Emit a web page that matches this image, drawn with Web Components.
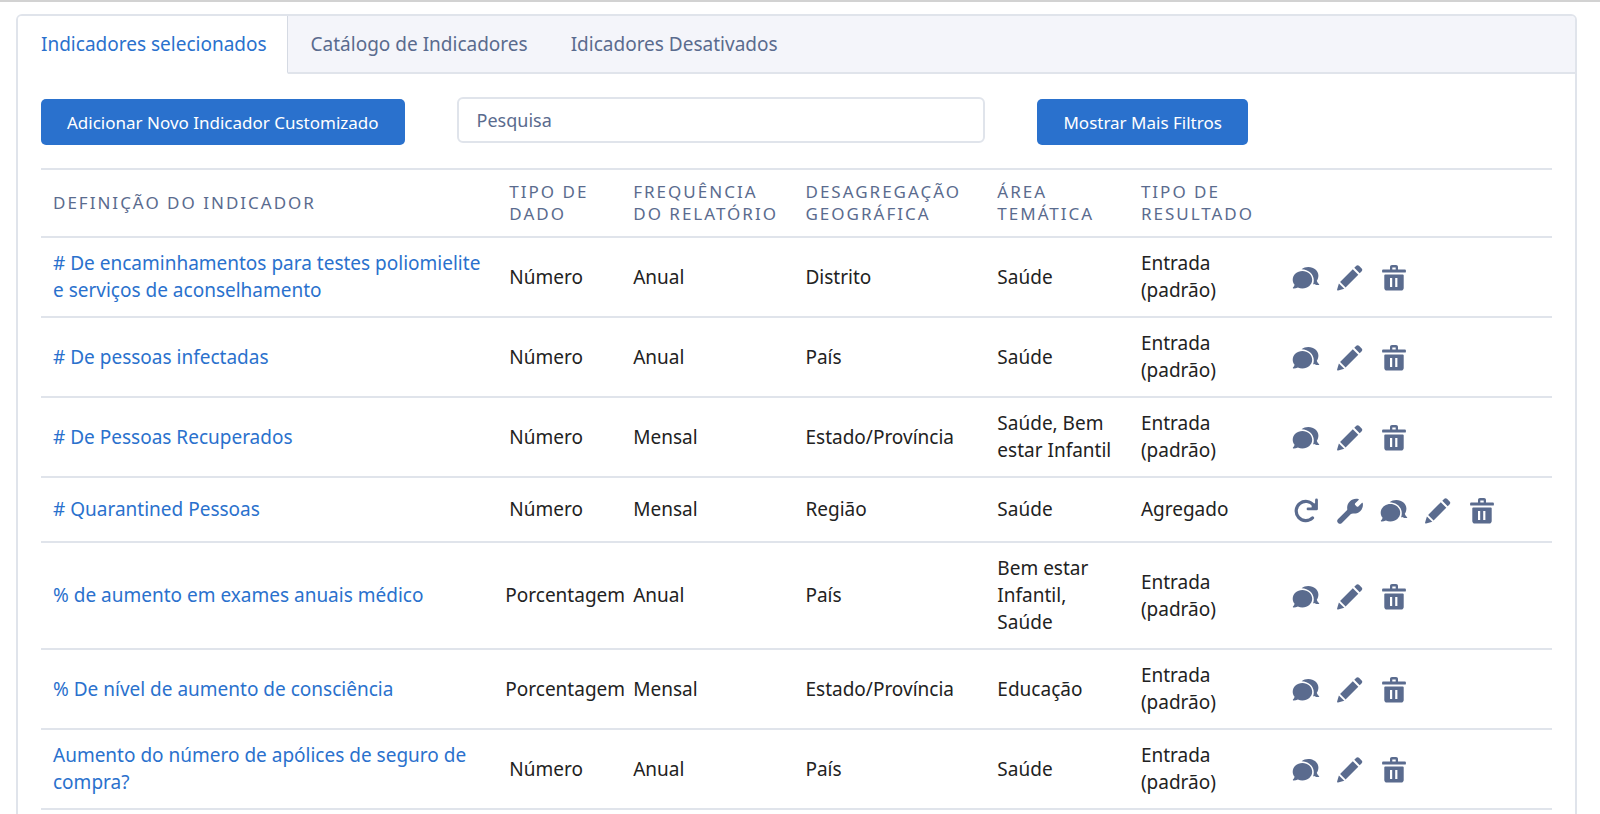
<!DOCTYPE html>
<html lang="pt">
<head>
<meta charset="utf-8">
<meta name="viewport" content="width=device-width, initial-scale=1">
<title>Indicadores</title>
<style>
  html { scrollbar-width: none; }
  body {
    margin: 0;
    background: #fff;
    color: #222;
    font-family: "Noto Sans", "Open Sans", sans-serif;
    font-size: 19px;
    line-height: 27px;
    --line: #e0e4eb;
    --slate: #5a6b8e;
    --blue: #2a71cd;
    --strip: #f4f5fa;
  }
</style>
</head>
<body>
<indicators-page>
  <tab-strip slot="tabs">
    <tab-link active>Indicadores selecionados</tab-link>
    <tab-link>Catálogo de Indicadores</tab-link>
    <tab-link>Idicadores Desativados</tab-link>
  </tab-strip>
  <filter-bar slot="filters">
    <brand-button>Adicionar Novo Indicador Customizado</brand-button>
    <search-box label="Pesquisa"></search-box>
    <brand-button>Mostrar Mais Filtros</brand-button>
  </filter-bar>
  <indicator-table></indicator-table>
</indicators-page>

<script>
class Base extends HTMLElement {
  connectedCallback() {
    if (this.shadowRoot) return;
    this.attachShadow({ mode: "open" }).innerHTML =
      "<style>*{box-sizing:border-box}</style>" + this.render();
  }
}

customElements.define("indicators-page", class extends Base {
  render() {
    return `<style>
      :host { display: block; border-top: 2px solid #d2d2d2; padding: 12px 23px 24px 16px; }
      main { border: 2px solid var(--line); border-radius: 6px; overflow: hidden; }
      .body { padding: 23px 23px 24px; }
    </style>
    <main>
      <slot name="tabs"></slot>
      <div class="body"><slot name="filters"></slot><slot></slot></div>
    </main>`;
  }
});

customElements.define("tab-strip", class extends Base {
  render() {
    return `<style>
      :host { display: block; background: var(--strip); }
      nav { display: flex; height: 58px; }
      nav::after { content: ""; flex: 1; border-bottom: 2px solid var(--line); }
    </style><nav><slot></slot></nav>`;
  }
});

customElements.define("tab-link", class extends Base {
  render() {
    return `<style>
      :host { display: flex; border-bottom: 2px solid var(--line); }
      :host([active]) { background: #fff; border-bottom-color: #fff; border-right: 1px solid #d5dae3; }
      a { display: flex; align-items: center; padding: 0 20px 0 23px; color: var(--slate);
          text-decoration: none; white-space: nowrap; }
      :host([active]) a { color: var(--blue); }
    </style><a href="#"><slot></slot></a>`;
  }
});

customElements.define("filter-bar", class extends Base {
  render() {
    return `<style>
      :host { display: flex; gap: 52px; height: 48px; align-items: flex-end; margin-bottom: 23px; }
      ::slotted(search-box) { align-self: flex-start; width: 35%; }
    </style><slot></slot>`;
  }
});

customElements.define("brand-button", class extends Base {
  render() {
    return `<style>
      :host { display: block; flex: none; }
      button { display: block; height: 46px; padding: 0 26px; border: 0; border-radius: 5px;
               background: var(--blue); color: #fff; font: inherit; font-size: 17px; white-space: nowrap; }
    </style><button type="button"><slot></slot></button>`;
  }
});

customElements.define("search-box", class extends Base {
  render() {
    const label = this.getAttribute("label");
    return `<style>
      :host { display: block; }
      input { display: block; width: 100%; height: 46px; padding: 0 18px; border: 2px solid var(--line);
              border-radius: 6px; background: #fff; color: #222; font: inherit; font-size: 18px; }
      input::placeholder { color: var(--slate); opacity: 1; }
    </style><input type="search" aria-label="${label}" placeholder="${label}">`;
  }
});

const ICONS = {
  refresh: ["Atualizar", `<path d="M20.5 20.9A9.6 9.6 0 1 1 21.6 8.4" fill="none" stroke="currentColor" stroke-width="3.2" stroke-linecap="round"/><path d="M24.5 3V11.9H16" fill="none" stroke="currentColor" stroke-width="2.8" stroke-linecap="round" stroke-linejoin="round"/><path d="M20 7L24 6V11H19.5Z"/>`],
  wrench: ["Configurar", `<path d="M4 24L15.5 12.5" stroke="currentColor" stroke-width="5.4" stroke-linecap="round"/><path d="M22.4 1.9C22.9 2.1 22.9 2.5 22.6 2.9L19.2 6.3C18.7 6.8 18.7 7.4 19.2 7.9L20.7 9.4C21.2 9.9 21.8 9.9 22.3 9.4L25.8 6C26.2 5.7 26.6 5.8 26.8 6.3C27.8 11.9 23.2 17.2 17.2 16.5L12 17.2L11.2 11.6C10.6 5.4 16.2 0.4 22.4 1.9Z"/>`],
  chat: ["Comentários", `<path d="M9.6 5.3C11.4 3.9 13.7 3 16.3 3C22 3 26.4 6.7 26.4 11.5C26.4 13.6 25.7 15.4 24.8 16.8C25.2 18.1 26.2 19.4 27.2 20.4C27.4 20.8 27.1 21.1 26.7 21.1C25.1 21.1 23.5 20.7 22.2 19.9C21.7 20.2 21.3 20.3 21 20.4C21.5 19.1 21.8 17.7 21.8 16.2C21.8 10.1 16.4 5.5 9.6 5.3Z"/><path d="M10.4 6.9C15.8 6.9 20.2 10.8 20.2 15.7C20.2 20.5 15.8 24.4 10.4 24.4C8.8 24.4 7.2 24.1 5.9 23.4C4.4 24 2.8 24.5 1.3 24.4C0.8 24.4 0.7 24 1 23.6C1.8 22.8 2.4 21.7 2.6 20.7C1.4 19.3 0.7 17.6 0.7 15.7C0.7 10.8 5 6.9 10.4 6.9Z"/>`],
  edit: ["Editar", `<path d="M16.8 5.2L22.3 10.7L9.6 23.4L4.1 17.9Z"/><path d="M18.3 3.8L20.3 1.8C21.1 1 22.2 1 23 1.8L25.7 4.5C26.5 5.3 26.5 6.4 25.7 7.2L23.7 9.2Z"/><path d="M2.9 19.4L8.3 24.8L2.1 26.4C1.4 26.5 1 26.1 1.1 25.4Z"/>`],
  trash: ["Excluir", `<path fill-rule="evenodd" d="M10 5.6V3C10 1.9 10.8 1 12 1H16C17.2 1 18 1.9 18 3V5.6H25C25.5 5.6 25.9 6 25.9 6.5V7.7C25.9 8.2 25.5 8.6 25 8.6H3C2.5 8.6 2.1 8.2 2.1 7.7V6.5C2.1 6 2.5 5.6 3 5.6ZM12.3 5.6H15.7V3.4H12.3Z"/><path fill-rule="evenodd" d="M5.2 10.4H22.8C23.3 10.4 23.7 10.8 23.7 11.3V24C23.7 25.5 22.7 26.6 21.2 26.6H6.8C5.3 26.6 4.3 25.5 4.3 24V11.3C4.3 10.8 4.7 10.4 5.2 10.4ZM10 14V23H12.2V14ZM15.2 14V23H17.4V14Z"/>`]
};

customElements.define("icon-button", class extends Base {
  render() {
    const [label, art] = ICONS[this.getAttribute("name")];
    return `<style>
      :host { display: block; }
      button { display: block; padding: 0; border: 0; background: none; color: var(--slate); }
      svg { display: block; width: 28px; height: 28px; fill: currentColor; }
    </style><button type="button" aria-label="${label}"><svg viewBox="0 0 28 28" aria-hidden="true">${art}</svg></button>`;
  }
});

const HEADS = [["Definição do Indicador", 30.2], ["Tipo de Dado", 8.2], ["Frequência do Relatório", 11.4],
  ["Desagregação Geográfica", 12.7], ["Área Temática", 9.5], ["Tipo de Resultado", 10], ["", 18]];
const IN = "Entrada (padrão)";
const ROWS = [
  ["# De encaminhamentos para testes poliomielite e serviços de aconselhamento", "Número", "Anual", "Distrito", "Saúde", IN],
  ["# De pessoas infectadas", "Número", "Anual", "País", "Saúde", IN],
  ["# De Pessoas Recuperados", "Número", "Mensal", "Estado/Província", "Saúde, Bem estar Infantil", IN],
  ["# Quarantined Pessoas", "Número", "Mensal", "Região", "Saúde", "Agregado"],
  ["% de aumento em exames anuais médico", "Porcentagem", "Anual", "País", "Bem estar Infantil, Saúde", IN],
  ["% De nível de aumento de consciência", "Porcentagem", "Mensal", "Estado/Província", "Educação", IN],
  ["Aumento do número de apólices de seguro de compra?", "Número", "Anual", "País", "Saúde", IN]
];

customElements.define("indicator-table", class extends Base {
  render() {
    const heads = HEADS.map(([text]) => text ? `<th scope="col">${text}</th>` : "<td></td>").join("");
    const cols = HEADS.map(([, w]) => `<col style="width:${w}%">`).join("");
    const rows = ROWS.map(([name, type, ...rest]) => {
      const icons = rest[3] === "Agregado" ? ["refresh", "wrench"] : [];
      icons.push("chat", "edit", "trash");
      return `<tr><td><a href="#">${name}</a></td>
        <td class="${type === "Porcentagem" ? "wide" : ""}">${type}</td>
        ${rest.map(t => `<td>${t}</td>`).join("")}
        <td><div class="actions">${icons.map(i => `<icon-button name="${i}"></icon-button>`).join("")}</div></td></tr>`;
    }).join("");
    return `<style>
      :host { display: block; }
      table { width: 100%; table-layout: fixed; border-spacing: 0; border-top: 2px solid var(--line); }
      th, td { padding: 12px 8px 12px 12px; border-bottom: 2px solid var(--line); text-align: left; vertical-align: middle; }
      th { padding: 11px 0 11px 12px; font-size: 17px; line-height: 22px; font-weight: 400;
           letter-spacing: 2px; text-transform: uppercase; color: var(--slate); }
      tbody tr { height: 65px; }
      td.wide { padding-left: 8px; padding-right: 0; }
      a { color: var(--blue); text-decoration: none; }
      .actions { display: flex; gap: 16px; padding-top: 2px; }
    </style>
    <table><colgroup>${cols}</colgroup><thead><tr>${heads}</tr></thead><tbody>${rows}</tbody></table>`;
  }
});
</script>
</body>
</html>
